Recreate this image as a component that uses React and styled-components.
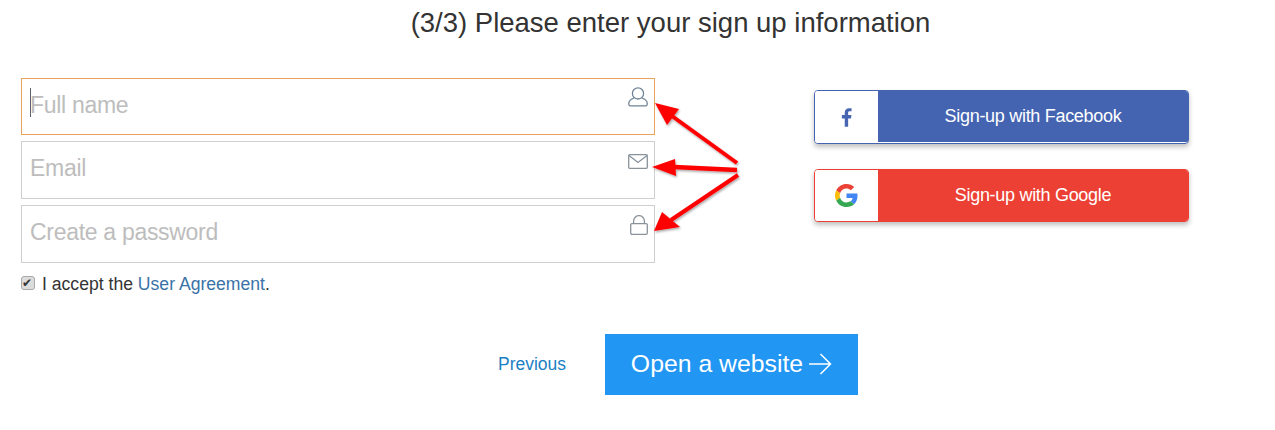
import styled, { createGlobalStyle } from "styled-components"

const Global = createGlobalStyle`
    * { box-sizing: border-box; }
    html, body { margin: 0; background: #fff; }
    body { font-family: "Liberation Sans", Arial, sans-serif; color: #333; }
`

function UserIcon() {
    return (
        <svg width="20" height="20" viewBox="0 0 20 20" fill="none" stroke="#6f8296" strokeWidth="1.3">
            <circle cx="10" cy="6.4" r="5.6" />
            <path d="M6.2 11C3.2 12 .8 13.600.8 16.400v.8c0 1 .7 1.700 1.700 1.700h15c1 0 1.700-.7 1.700-1.700v-.8c0-2.800-2.400-4.400-5.400-5.400" />
        </svg>
    )
}

function MailIcon() {
    return (
        <svg width="20" height="15" viewBox="0 0 20 15" fill="none" stroke="#8a939b" strokeWidth="1.300">
            <rect x=".7" y=".7" width="18.600" height="13.600" rx="1" />
            <path d="M1 1.400l9 7 9-7" />
        </svg>
    )
}

function LockIcon() {
    return (
        <svg width="18" height="20" viewBox="0 0 18 20" fill="none" stroke="#8a939b" strokeWidth="1.300">
            <rect x=".7" y="8.600" width="16.600" height="10.700" rx="1.200" />
            <path d="M3.600 8.600V6a5.400 5.400 0 0 1 10.800 0v2.600" />
        </svg>
    )
}

function GoogleIcon() {
    return (
        <svg width="23" height="23" viewBox="0 0 48 48">
            <path fill="#EA4335" d="M24 9.500c3.500 0 6.700 1.200 9.200 3.600l6.900-6.900C35.900 2.400 30.500 0 24 0 14.600 0 6.500 5.400 2.600 13.200l8 6.200C12.500 13.600 17.800 9.500 24 9.500z" />
            <path fill="#4285F4" d="M47 24.500c0-1.600-.1-3.100-.4-4.500H24v9h12.900c-.6 3-2.200 5.500-4.700 7.200l7.700 6c4.500-4.200 7.100-10.300 7.100-17.700z" />
            <path fill="#FBBC05" d="M10.600 28.600c-.5-1.400-.8-3-.8-4.600s.3-3.200.8-4.600l-8-6.200C.9 16.500 0 20.100 0 24s.9 7.500 2.600 10.800l8-6.200z" />
            <path fill="#34A853" d="M24 48c6.500 0 11.900-2.100 15.900-5.800l-7.700-6c-2.200 1.500-4.900 2.300-8.200 2.300-6.200 0-11.500-4.200-13.400-9.900l-8 6.200C6.500 42.600 14.600 48 24 48z" />
        </svg>
    )
}

function FacebookIcon() {
    return (
        <svg width="11" height="19" viewBox="0 0 10 17">
            <path fill="#4765b1" d="M6.500 17V9.300h2.600l.4-3H6.500V4.400c0-.9.300-1.500 1.500-1.500h1.600V.2C9.300.1 8.400 0 7.300 0 5 0 3.400 1.400 3.400 4v2.300H.8v3h2.600V17z" />
        </svg>
    )
}

function ArrowRight() {
    return (
        <svg width="24" height="22" viewBox="0 0 24 22" fill="none" stroke="#fff" strokeWidth="1.500">
            <path d="M1 11h21.500M12.500 1l10 10-10 10" />
        </svg>
    )
}

function Arrows() {
    return (
        <ArrowLayer width="100" height="150" viewBox="0 0 100 150">
            <defs>
                <filter id="shadow" x="-20%" y="-20%" width="140%" height="140%">
                    <feDropShadow dx="1" dy="1.500" stdDeviation="1.200" floodColor="#000" floodOpacity="0.35" />
                </filter>
            </defs>
            <g fill="#f00" stroke="#f00" filter="url(#shadow)">
                <path strokeWidth="4" d="M82 63L17 16" />
                <path strokeWidth="0" d="M0 3L24 9L12 25z" />
                <path strokeWidth="4.500" d="M82 70L19 67" />
                <path strokeWidth="0" d="M-3 67L20 59L21 76z" />
                <path strokeWidth="4" d="M83 75L16 120" />
                <path strokeWidth="0" d="M-1 131L7 112L25 127z" />
            </g>
        </ArrowLayer>
    )
}

export default function App() {
    return (
        <Page>
            <Global />
            <Title>(3/3) Please enter your sign up information</Title>
            <Columns>
                <Form>
                    <Field $height="57px">
                        <Input $active placeholder="Full name" />
                        <FieldIcon $top="9px"><UserIcon /></FieldIcon>
                    </Field>
                    <Field>
                        <Input placeholder="Email" />
                        <FieldIcon $top="13px"><MailIcon /></FieldIcon>
                    </Field>
                    <Field>
                        <Input placeholder="Create a password" />
                        <FieldIcon $top="10px"><LockIcon /></FieldIcon>
                    </Field>
                    <Agreement>
                        <Check type="checkbox" defaultChecked readOnly />
                        <span>I accept the <AgreementLink href="#">User Agreement</AgreementLink>.</span>
                    </Agreement>
                    <Arrows />
                </Form>
                <Social>
                    <SocialButton $color="#4464b2" $height="54px">
                        <SocialIcon><FacebookIcon /></SocialIcon>
                        <SocialLabel $color="#4464b2" $inset>Sign-up with Facebook</SocialLabel>
                    </SocialButton>
                    <SocialButton $color="#ec4034" $height="53px">
                        <SocialIcon><GoogleIcon /></SocialIcon>
                        <SocialLabel $color="#ec4034">Sign-up with Google</SocialLabel>
                    </SocialButton>
                </Social>
            </Columns>
            <Actions>
                <Previous href="#">Previous</Previous>
                <Submit>Open a website <ArrowRight /></Submit>
            </Actions>
        </Page>
    )
}

const Page = styled.div`
    width: 1275px;
    height: 430px;
    padding: 8px 0 0 21px;
    overflow: hidden;
`
const Title = styled.h1`
    margin: 0 0 0 45px;
    text-align: center;
    width: 1209px;
    font-size: 27.500px;
    line-height: 30px;
    font-weight: 400;
    color: #333;
`
const Columns = styled.div`
    display: flex;
    margin-top: 40px;
`
const Form = styled.div`
    position: relative;
    width: 634px;
    display: flex;
    flex-direction: column;
    gap: 6px;
`
const Field = styled.div`
    position: relative;
    height: ${p => p.$height || "58px"};
`
const Input = styled.input`
    width: 100%;
    height: 100%;
    padding: 0 8px 3px;
    border: 1px solid ${p => (p.$active ? "#e8a45c" : "#cfcfcf")};
    background: #fff;
    font-family: inherit;
    font-size: 23px;
    letter-spacing: -0.3px;
    outline: none;
    &::placeholder {
        color: #bdbdbd;
        opacity: 1;
    }
    ${p => p.$active && `
        background-image: linear-gradient(#5a6470, #5a6470);
        background-size: 1px 29px;
        background-position: 8px 9px;
        background-repeat: no-repeat;
    `}
`
const FieldIcon = styled.span`
    position: absolute;
    top: ${p => p.$top};
    right: 7px;
    display: flex;
`
const Agreement = styled.label`
    display: flex;
    align-items: center;
    gap: 7px;
    height: 20px;
    margin-top: 5px;
    font-size: 17.600px;
    color: #333;
`
const Check = styled.input`
    appearance: none;
    position: relative;
    width: 14px;
    height: 14px;
    margin: 0 0 3px 0;
    border: 1px solid #a9a9a9;
    border-radius: 3px;
    background: #dcdcdc;
    &:checked::after {
        content: "✔";
        position: absolute;
        left: 0;
        top: -1px;
        font-family: "DejaVu Sans", sans-serif;
        font-size: 12px;
        line-height: 14px;
        color: #333;
    }
`
const AgreementLink = styled.a`
    color: #3a72a8;
    text-decoration: none;
`
const ArrowLayer = styled.svg`
    position: absolute;
    left: 634px;
    top: 22px;
    overflow: visible;
`
const Social = styled.div`
    display: flex;
    flex-direction: column;
    gap: 25px;
    width: 375px;
    margin: 12px 0 0 159px;
`
const SocialButton = styled.button`
    display: flex;
    width: 100%;
    height: ${p => p.$height};
    padding: 0;
    border: 1px solid ${p => p.$color};
    border-radius: 4px;
    overflow: hidden;
    background: #fff;
    color: #fff;
    font-family: inherit;
    box-shadow: 0 3px 5px rgba(0, 0, 0, 0.25);
`
const SocialIcon = styled.span`
    flex: 0 0 63px;
    height: 100%;
    display: flex;
    align-items: center;
    justify-content: center;
    background: #fff;
`
const SocialLabel = styled.span`
    flex: 1;
    display: flex;
    align-items: center;
    justify-content: center;
    margin-bottom: ${p => (p.$inset ? "1px" : "0")};
    background: ${p => p.$color};
    font-size: 18px;
    letter-spacing: -0.3px;
`
const Actions = styled.div`
    display: flex;
    align-items: center;
    margin: 40px 0 0 477px;
`
const Previous = styled.a`
    width: 107px;
    color: #1b7fc4;
    font-size: 17.500px;
    text-decoration: none;
`
const Submit = styled.button`
    display: flex;
    align-items: center;
    justify-content: center;
    gap: 5px;
    width: 253px;
    height: 61px;
    padding: 0 0 2px;
    border: 0;
    background: #2196f3;
    color: #fff;
    font-family: inherit;
    font-size: 24.800px;
`
